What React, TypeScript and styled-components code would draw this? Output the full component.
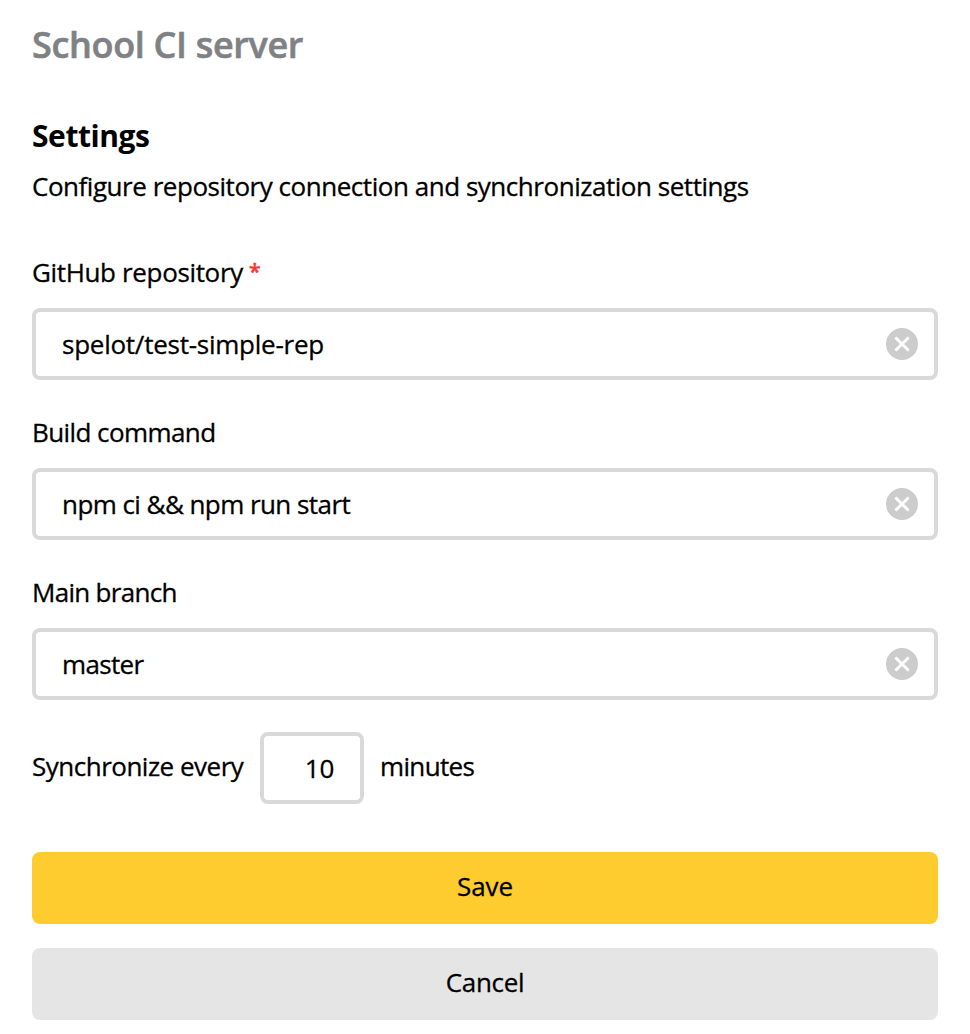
import React from "react";
import styled, { createGlobalStyle } from "styled-components";

const Global = createGlobalStyle`
  *, *::before, *::after { box-sizing: border-box; }
  body { margin: 0; background: #fff; color: #000; font: 400 26px/36px "Open Sans", "Noto Sans", sans-serif; -webkit-text-stroke: 0.3px; }
  input, button { font: inherit; color: inherit; }
`;

const Line = styled.span<{ $track?: number }>`
  display: inline-block;
  white-space: nowrap;
  letter-spacing: ${(p) => p.$track ?? 0}px;
`;

const Page = styled.main`
  width: 970px;
  height: 1034px;
  padding: 23px 32px 0;
  display: flex;
  flex-direction: column;
  align-items: stretch;
`;

const Brand = styled.h1`
  margin: 0 0 51px;
  color: #7f8285;
  font-size: 36px;
  line-height: 44px;
  font-weight: 600;
  -webkit-text-stroke: 0.6px;
`;

const Title = styled.h2`
  margin: 0;
  font-size: 30px;
  line-height: 36px;
  font-weight: 700;
  -webkit-text-stroke: 0;
`;

const Lead = styled.p`
  margin: 14px 0 50px;
`;

const Field = styled.label`
  display: flex;
  flex-direction: column;
  gap: 18px;
  margin-bottom: 34px;
`;

const LabelRow = styled.span`
  display: flex;
  height: 36px;
`;

const Required = styled.span`
  margin-left: 6px;
  color: #f33;
  font-size: 22px;
  line-height: 32px;
  font-weight: 600;
`;

const Control = styled.span`
  display: flex;
  align-items: center;
  height: 72px;
  padding: 0 16px 0 26px;
  border: 4px solid #d9d9d9;
  border-radius: 8px;
`;

const Value = styled.span`
  flex: 1;
`;

const Sync = styled.div`
  display: flex;
  align-items: center;
  margin: -2px 0 48px;
`;

const SyncLabel = styled.span`
  width: 212px;
  padding-bottom: 4px;
  white-space: nowrap;
`;

const Unit = styled.span`
  padding-bottom: 4px;
`;

const Minutes = styled.span`
  display: flex;
  align-items: center;
  justify-content: flex-end;
  width: 104px;
  height: 72px;
  padding-right: 26px;
  margin: 0 16px;
  border: 4px solid #d9d9d9;
  border-radius: 8px;
`;

const Button = styled.button<{ $primary?: boolean }>`
  flex: none;
  height: 72px;
  padding: 0 0 5px;
  border: 0;
  border-radius: 8px;
  margin-bottom: 24px;
  background: ${(p) => (p.$primary ? "#ffcc2f" : "#e5e5e5")};
`;

const Clear = () => (
  <svg width="32" height="32" viewBox="0 0 32 32">
    <circle cx="16" cy="16" r="16" fill="#ccc" />
    <path d="M9.4 9.4l13.2 13.2M22.6 9.4L9.4 22.6" stroke="#fff" strokeWidth="2.8" />
  </svg>
);

const fields = [
  { label: "GitHub repository", labelTrack: -0.35, value: "spelot/test-simple-rep", valueTrack: -0.25, required: true },
  { label: "Build command", labelTrack: -0.58, value: "npm ci && npm run start", valueTrack: -0.56 },
  { label: "Main branch", labelTrack: -0.7, value: "master", valueTrack: -0.65 },
];

export default function App() {
  return (
    <Page>
      <Global />
      <Brand><Line $track={-0.33}>School CI server</Line></Brand>
      <Title><Line $track={-0.43}>Settings</Line></Title>
      <Lead><Line $track={-0.465}>Configure repository connection and synchronization settings</Line></Lead>
      {fields.map((f) => (
        <Field key={f.label}>
          <LabelRow>
            <Line $track={f.labelTrack}>{f.label}</Line>
            {f.required && <Required>*</Required>}
          </LabelRow>
          <Control>
            <Value><Line $track={f.valueTrack}>{f.value}</Line></Value>
            <Clear />
          </Control>
        </Field>
      ))}
      <Sync>
        <SyncLabel><Line $track={-0.5}>Synchronize every</Line></SyncLabel>
        <Minutes><Line $track={-0.3}>10</Line></Minutes>
        <Unit><Line $track={-0.65}>minutes</Line></Unit>
      </Sync>
      <Button $primary><Line $track={-0.1}>Save</Line></Button>
      <Button><Line $track={-0.35}>Cancel</Line></Button>
    </Page>
  );
}
